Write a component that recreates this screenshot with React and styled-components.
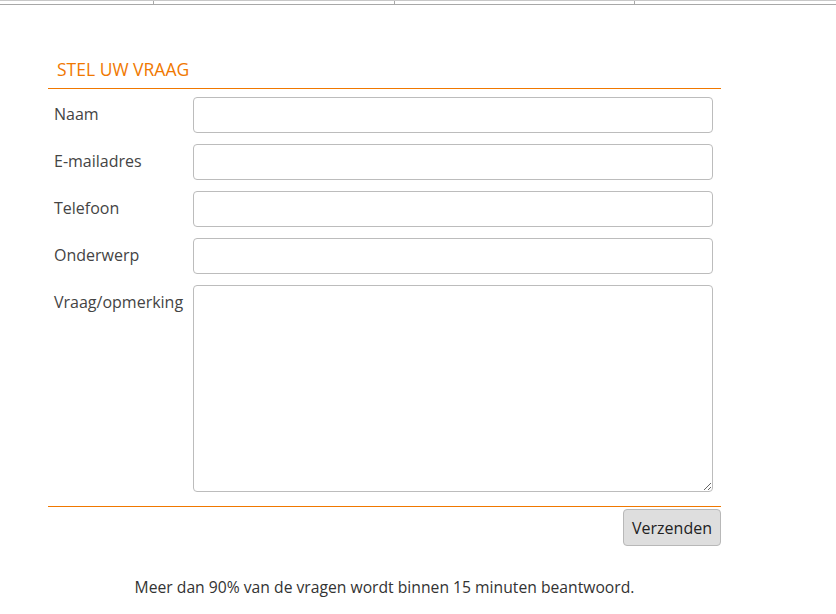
import React from "react";
import styled, { createGlobalStyle } from "styled-components";

const GlobalStyle = createGlobalStyle`
  body {
    margin: 0;
    background: #fff;
    font-family: "Open Sans", "DejaVu Sans", sans-serif;
    color: #333;
  }
`;

const fields = [
  { id: "naam", label: "Naam" },
  { id: "email", label: "E-mailadres" },
  { id: "telefoon", label: "Telefoon" },
  { id: "onderwerp", label: "Onderwerp" },
];

export default function App() {
  return (
    <Page>
      <GlobalStyle />
      <TopBar>
        <TopCell $w={154} />
        <TopCell $w={240} />
        <TopCell $w={240} />
        <TopCell $w={202} />
      </TopBar>
      <Wrapper>
        <Title>STEL UW VRAAG</Title>
        <Form onSubmit={(e) => e.preventDefault()}>
          {fields.map((f) => (
            <Row key={f.id}>
              <Label htmlFor={f.id}>{f.label}</Label>
              <Input id={f.id} type="text" />
            </Row>
          ))}
          <Row>
            <Label htmlFor="vraag">Vraag/opmerking</Label>
            <TextArea id="vraag" />
          </Row>
          <Actions>
            <Button type="submit">Verzenden</Button>
          </Actions>
        </Form>
        <Note>Meer dan 90% van de vragen wordt binnen 15 minuten beantwoord.</Note>
      </Wrapper>
    </Page>
  );
}

const Page = styled.div`
  width: 836px;
  min-height: 614px;
`;

const TopBar = styled.div`
  display: flex;
  height: 3px;
  border-top: 1px solid #c8c8c8;
  border-bottom: 1px solid #a8a8a8;
`;

const TopCell = styled.div`
  width: ${(p) => p.$w}px;
  border-right: 1px solid #a8a8a8;
  &:last-child {
    border-right: none;
  }
`;

const Wrapper = styled.div`
  width: 673px;
  margin-left: 48px;
  padding-top: 54px;
`;

const Title = styled.h2`
  margin: 0;
  padding: 0 0 9px 9px;
  font-size: 17.5px;
  font-weight: 400;
  color: #f07800;
  border-bottom: 1px solid #f07800;
  line-height: 20px;
`;

const Form = styled.form`
  display: flex;
  flex-direction: column;
  gap: 11px;
  padding-top: 8px;
`;

const Row = styled.div`
  display: flex;
  align-items: flex-start;
`;

const Label = styled.label`
  width: 145px;
  padding-left: 6px;
  padding-top: 7px;
  font-size: 16px;
  line-height: 20px;
  color: #444;
  box-sizing: border-box;
`;

const Input = styled.input`
  width: 520px;
  height: 36px;
  box-sizing: border-box;
  border: 1px solid #bcbcbc;
  border-radius: 4px;
  padding: 6px 8px;
  font-family: inherit;
  font-size: 15px;
  outline: none;
`;

const TextArea = styled.textarea`
  width: 520px;
  height: 207px;
  box-sizing: border-box;
  border: 1px solid #bcbcbc;
  border-radius: 4px;
  padding: 6px 8px;
  font-family: inherit;
  font-size: 15px;
  outline: none;
  resize: both;
`;

const Actions = styled.div`
  display: flex;
  justify-content: flex-end;
  border-top: 1px solid #f07800;
  margin-top: 3px;
  padding-top: 2px;
`;

const Button = styled.button`
  height: 37px;
  padding: 0 8px;
  background: #dedede;
  border: 1px solid #b8b8b8;
  border-radius: 4px;
  font-family: inherit;
  font-size: 16px;
  color: #222;
  cursor: pointer;
`;

const Note = styled.p`
  margin: 30px 0 0;
  text-align: center;
  font-size: 15.7px;
  color: #333;
`;
